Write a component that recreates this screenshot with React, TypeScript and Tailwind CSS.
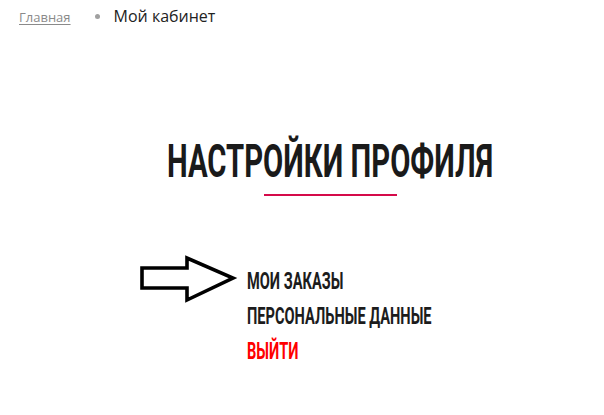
import React from "react";

const menu = [
  { label: "Мои заказы", color: "text-[#1c1c1c]" },
  { label: "Персональные данные", color: "text-[#1c1c1c]" },
  { label: "Выйти", color: "text-[#ff0000]" },
];

const App = () => {
  return (
    <div className="w-[604px] h-[415px] bg-white overflow-hidden">
      {/* breadcrumbs */}
      <nav className="flex items-baseline pl-[19px] pt-[4px] leading-[24px] font-['Open_Sans',sans-serif]">
        <a href="#" className="text-[13px] text-[#8a8a8a] underline underline-offset-2">
          Главная
        </a>
        <span className="ml-[24px] mr-[14px] w-[5px] h-[5px] rounded-full bg-[#a0a0a0] self-center" />
        <span className="text-[16px] text-[#222]">Мой кабинет</span>
      </nav>

      <div className="pl-[56px] flex flex-col items-center">
        <h1 className="mt-[109px] h-[46px] leading-[46px] text-[46px] font-bold uppercase text-[#1a1a1a] font-['Roboto',sans-serif] whitespace-nowrap">
          <span className="inline-block scale-x-[0.637] origin-center">Настройки профиля</span>
        </h1>
        <div className="mt-[10px] h-[2px] w-[133px] bg-[#d50a4a]" />

        {/* profile menu */}
        <div className="relative self-start ml-[191px] mt-[68px]">
          <svg
            className="absolute left-[-109px] top-[-10px]"
            width="100"
            height="50"
            viewBox="0 0 100 50"
          >
            <polygon
              points="4,14 49,14 49,4 95,24 49,46 49,34 4,34"
              fill="white"
              stroke="black"
              strokeWidth="3.6"
            />
          </svg>
          <ul className="font-['Roboto',sans-serif] font-bold uppercase text-[23px] leading-[35px]">
            {menu.map((item) => (
              <li key={item.label} className={`${item.color} whitespace-nowrap`}>
                <span className="inline-block scale-x-[0.635] origin-left">{item.label}</span>
              </li>
            ))}
          </ul>
        </div>
      </div>
    </div>
  );
};

export default App;
